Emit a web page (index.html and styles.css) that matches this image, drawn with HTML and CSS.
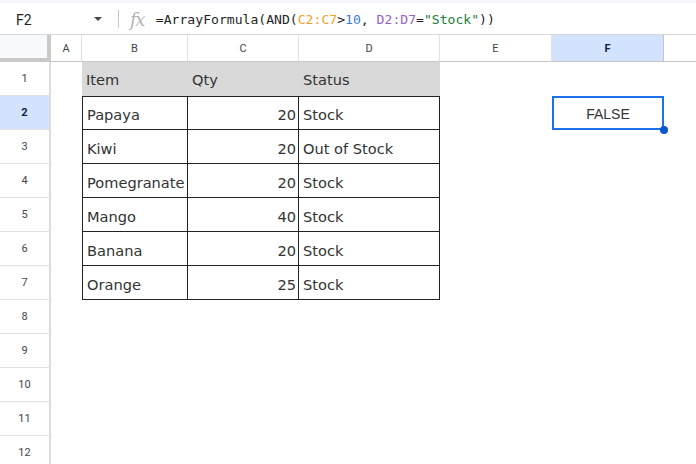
FILE: index.html
```html
<!DOCTYPE html>
<html>
<head>
<meta charset="utf-8">
<link rel="stylesheet" href="styles.css">
</head>
<body>
<div class="topstrip"></div>
<div class="fbar">
  <div class="namebox">F2</div>
  <span class="caret"></span>
  <span class="sep"></span>
  <span class="fx">fx</span>
  <div class="formula">=ArrayFormula(AND(<span class="f-or">C2:C7</span>&gt;<span class="f-num">10</span>, <span class="f-pu">D2:D7</span>=<span class="f-str">"Stock"</span>))</div>
</div>
<div class="sheet">
  <div class="corner"></div>
  <div class="ch">A</div><div class="ch">B</div><div class="ch">C</div><div class="ch">D</div><div class="ch">E</div><div class="ch ch-sel">F</div><div class="ch ch-last"></div>

  <div class="rh">1</div><div class="c"></div><div class="c hd">Item</div><div class="c hd">Qty</div><div class="c hd">Status</div><div class="c"></div><div class="c"></div><div class="c"></div>

  <div class="rh rh-sel">2</div><div class="c"></div><div class="c t tl tt">Papaya</div><div class="c t tt num">20</div><div class="c t tt">Stock</div><div class="c"></div><div class="c sel"><span class="val">FALSE</span><span class="handle"></span></div><div class="c"></div>

  <div class="rh">3</div><div class="c"></div><div class="c t tl">Kiwi</div><div class="c t num">20</div><div class="c t">Out of Stock</div><div class="c"></div><div class="c"></div><div class="c"></div>

  <div class="rh">4</div><div class="c"></div><div class="c t tl">Pomegranate</div><div class="c t num">20</div><div class="c t">Stock</div><div class="c"></div><div class="c"></div><div class="c"></div>

  <div class="rh">5</div><div class="c"></div><div class="c t tl">Mango</div><div class="c t num">40</div><div class="c t">Stock</div><div class="c"></div><div class="c"></div><div class="c"></div>

  <div class="rh">6</div><div class="c"></div><div class="c t tl">Banana</div><div class="c t num">20</div><div class="c t">Stock</div><div class="c"></div><div class="c"></div><div class="c"></div>

  <div class="rh">7</div><div class="c"></div><div class="c t tl">Orange</div><div class="c t num">25</div><div class="c t">Stock</div><div class="c"></div><div class="c"></div><div class="c"></div>

  <div class="rh">8</div><div class="c"></div><div class="c"></div><div class="c"></div><div class="c"></div><div class="c"></div><div class="c"></div><div class="c"></div>
  <div class="rh">9</div><div class="c"></div><div class="c"></div><div class="c"></div><div class="c"></div><div class="c"></div><div class="c"></div><div class="c"></div>
  <div class="rh">10</div><div class="c"></div><div class="c"></div><div class="c"></div><div class="c"></div><div class="c"></div><div class="c"></div><div class="c"></div>
  <div class="rh">11</div><div class="c"></div><div class="c"></div><div class="c"></div><div class="c"></div><div class="c"></div><div class="c"></div><div class="c"></div>
  <div class="rh">12</div><div class="c"></div><div class="c"></div><div class="c"></div><div class="c"></div><div class="c"></div><div class="c"></div><div class="c"></div>
</div>
</body>
</html>
```
FILE: styles.css
```css
* { box-sizing: border-box; }
html, body {
  margin: 0;
  padding: 0;
  width: 696px;
  height: 464px;
  overflow: hidden;
  background: #fff;
  font-family: Roboto, "Liberation Sans", Arial, sans-serif;
}
.topstrip {
  height: 3px;
  background: #f3f6fb;
}
.fbar {
  height: 32px;
  border-bottom: 1px solid #d6d8db;
  display: flex;
  align-items: center;
  background: #fff;
}
.namebox {
  width: 89px;
  padding-left: 16px;
  font-size: 14px;
  color: #1f1f1f;
  padding-top: 2px;
}
.caret {
  width: 0;
  height: 0;
  border-left: 4px solid transparent;
  border-right: 4px solid transparent;
  border-top: 4px solid #444746;
  margin-left: 5px;
  margin-top: 1px;
}
.sep {
  width: 1px;
  height: 18px;
  background: #c7c7c7;
  margin-left: 16px;
}
.fx {
  font-family: "DejaVu Serif", "Liberation Serif", serif;
  font-style: italic;
  font-size: 18px;
  color: #b4b4b4;
  margin-left: 11px;
  letter-spacing: -1.5px;
  padding-top: 1px;
}
.formula {
  margin-left: 12px;
  font-family: "DejaVu Sans Mono", "Liberation Mono", monospace;
  font-size: 13.1px;
  color: #1f1f1f;
  white-space: nowrap;
  padding-top: 2px;
}
.f-or { color: #f29f2c; }
.f-num { color: #3a7be0; }
.f-pu { color: #9a5fc2; }
.f-str { color: #188038; }

.sheet {
  display: grid;
  grid-template-columns: 51px 31px 106px 111px 141px 112px 112px 1fr;
  grid-template-rows: 27px repeat(12, 34px);
}
.corner {
  background: #f8f9fa;
  border-right: 4px solid #c9c9c9;
  border-bottom: 4px solid #c9c9c9;
}
.ch {
  display: flex;
  align-items: center;
  justify-content: center;
  font-size: 11px;
  color: #444746;
  border-right: 1px solid #e1e1e1;
  border-bottom: 1px solid #c4c7c5;
  background: #fff;
}
.ch-last { border-right: none; }
.ch-sel {
  background: #d3e3fd;
  color: #0b1f44;
  font-weight: bold;
  border-right: 1px solid #c0c8d4;
}
.rh {
  display: flex;
  align-items: center;
  justify-content: center;
  font-size: 11px;
  color: #444746;
  border-right: 2px solid #dcdcdc;
  border-bottom: 1px solid #e1e1e1;
  background: #fff;
}
.rh-sel {
  background: #d3e3fd;
  color: #0b1f44;
  font-weight: bold;
}
.c {
  display: flex;
  align-items: flex-end;
  padding: 0 4px 7px 4px;
  font-family: "DejaVu Sans", Verdana, sans-serif;
  font-size: 14.6px;
  color: #333;
  white-space: nowrap;
  overflow: visible;
}
.hd {
  background: #d9d9d9;
  padding-bottom: 8px;
}
.t {
  border-right: 1px solid #222;
  border-bottom: 1px solid #222;
  padding-bottom: 6px;
}
.tl { border-left: 1px solid #222; }
.tt { border-top: 1px solid #222; }
.num {
  justify-content: flex-end;
  padding-right: 2px;
}
.sel {
  position: relative;
  justify-content: center;
  align-items: center;
  padding: 0;
}
.sel::after {
  content: "";
  position: absolute;
  left: 0;
  top: 0;
  right: 0;
  bottom: 0;
  border: 2px solid #1a73e8;
}
.val {
  font-family: "Liberation Sans", Arial, sans-serif;
  font-size: 14px;
  color: #333;
  padding-top: 1px;
}
.handle {
  position: absolute;
  right: -4px;
  bottom: -4px;
  width: 8px;
  height: 8px;
  border-radius: 50%;
  background: #0b57d0;
  z-index: 2;
}
```
